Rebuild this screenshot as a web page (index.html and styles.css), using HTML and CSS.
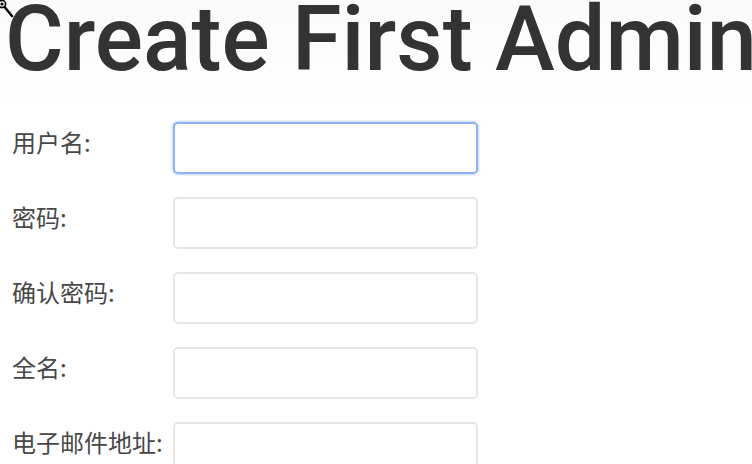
FILE: index.html
```html
<!DOCTYPE html>
<html lang="zh-CN">
<head>
    <meta charset="UTF-8">
    <meta name="viewport" content="width=device-width, initial-scale=1.0">
    <title>Create First Admin User</title>
    <link rel="stylesheet" href="styles.css">
</head>
<body>
    <svg class="cursor" width="16" height="18" viewBox="0 0 16 18">
        <circle cx="3" cy="4" r="3.6" fill="#fff" stroke="#000" stroke-width="1.6"/>
        <circle cx="3" cy="4" r="1.6" fill="#000"/>
        <line x1="5.6" y1="7" x2="13" y2="16" stroke="#000" stroke-width="2.4" stroke-linecap="round"/>
    </svg>

    <div class="page">
        <h1 class="title">Create First Admin User</h1>

        <form class="setup-form">
            <div class="form-row">
                <label class="form-label" for="username">用户名:</label>
                <input class="form-input focused" id="username" type="text">
            </div>
            <div class="form-row">
                <label class="form-label" for="password1">密码:</label>
                <input class="form-input" id="password1" type="password">
            </div>
            <div class="form-row">
                <label class="form-label" for="password2">确认密码:</label>
                <input class="form-input" id="password2" type="password">
            </div>
            <div class="form-row">
                <label class="form-label" for="fullname">全名:</label>
                <input class="form-input" id="fullname" type="text">
            </div>
            <div class="form-row">
                <label class="form-label" for="email">电子邮件地址:</label>
                <input class="form-input" id="email" type="text">
            </div>
        </form>
    </div>
</body>
</html>
```

FILE: styles.css
```css
* {
    margin: 0;
    padding: 0;
    box-sizing: border-box;
}

html, body {
    height: 100%;
    overflow: hidden;
}

body {
    font-family: Roboto, "Noto Sans", sans-serif;
    background: linear-gradient(180deg, #fafafa 0%, #ffffff 110px);
    color: #333;
}

.cursor {
    position: absolute;
    left: -1px;
    top: 0;
    z-index: 10;
}

.page {
    padding: 0 0 0 5px;
}

.title {
    font-family: Roboto, sans-serif;
    font-size: 90px;
    font-weight: 500;
    line-height: 80px;
    color: #333;
    white-space: nowrap;
    margin-bottom: 42px;
}

.setup-form {
    display: flex;
    flex-direction: column;
    gap: 23px;
}

.form-row {
    display: flex;
    align-items: flex-start;
}

.form-label {
    width: 168px;
    padding-top: 3px;
    padding-left: 7px;
    font-family: "Noto Sans CJK SC", "Noto Sans", sans-serif;
    font-size: 24px;
    line-height: 34px;
    color: #484848;
    white-space: nowrap;
}

.form-input {
    width: 305px;
    height: 52px;
    border: 2px solid #e6e6e6;
    border-radius: 5px;
    background: #fff;
    outline: none;
}

.form-input.focused {
    border-color: #8db4f4;
    box-shadow: 0 0 2px 1px rgba(120, 165, 240, 0.45);
}
```
